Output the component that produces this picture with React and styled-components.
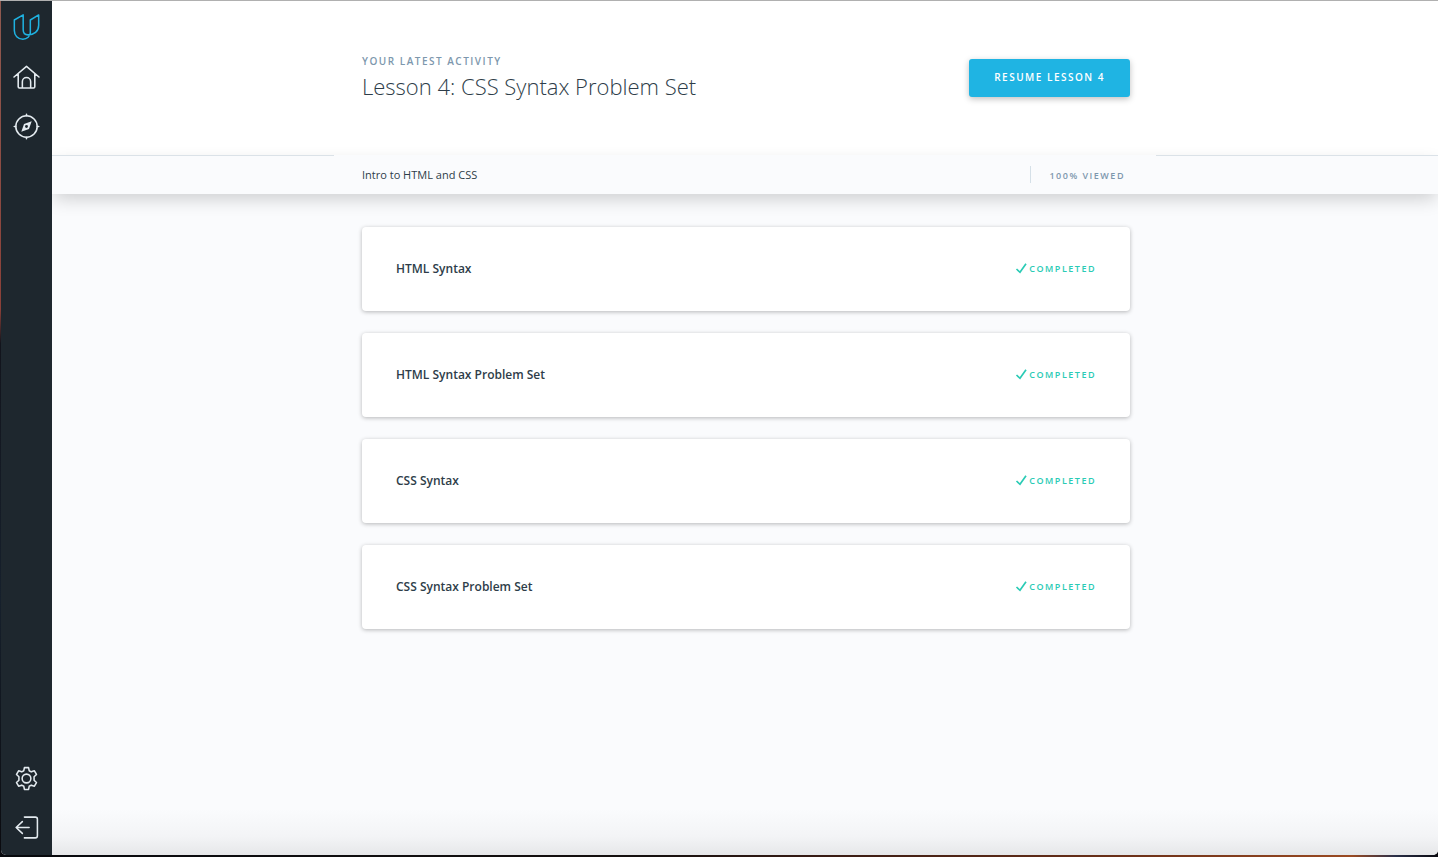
import React from "react";
import styled, { createGlobalStyle } from "styled-components";

const GlobalStyle = createGlobalStyle`
  *, *::before, *::after { box-sizing: border-box; }
  body {
    margin: 0;
    font-family: "Open Sans", "Noto Sans", sans-serif;
    color: #2e3d49;
    -webkit-font-smoothing: antialiased;
  }
  h1, h2, p { margin: 0; }
`;

const Desktop = styled.div`
  display: flex;
  flex-direction: column;
  min-height: 100vh;
  border-top: 1px solid #b0b0b0;
  padding: 0 0 2px 1px;
  background:
    linear-gradient(90deg, #07090d 0%, #15100f 45%, #3a1c14 58%, #6b3018 78%, #9a4a22 94%, #2a2f48 97%, #0a0a10 100%) bottom / 100% 2px no-repeat,
    linear-gradient(180deg, #8f5a50 0%, #8a4038 36%, #12141c 40%, #16202c 70%, #0a0a0e 100%);
`;

const Window = styled.div`
  display: flex;
  flex: 1;
  border-radius: 0 0 5px 5px;
  overflow: hidden;
  background: #fafbfd;
`;

const Sidebar = styled.nav`
  display: flex;
  flex-direction: column;
  justify-content: space-between;
  flex: none;
  width: 51px;
  padding: 2px 0 3px;
  background: #1e272e;
`;

const NavGroup = styled.div`
  display: flex;
  flex-direction: column;
`;

const NavLink = styled.a`
  display: flex;
  align-items: center;
  justify-content: center;
  height: 49px;
  margin-bottom: ${(p) => (p.$brand ? "1px" : "0")};
  color: ${(p) => (p.$brand ? "#1fb1e0" : "#e3eaef")};

  svg {
    display: block;
    width: 27px;
    height: 27px;
    fill: none;
    stroke: currentColor;
    stroke-width: 1.5;
    stroke-linecap: round;
    stroke-linejoin: round;
  }
`;

const Main = styled.main`
  display: flex;
  flex-direction: column;
  flex: 1;
  min-width: 0;
  overflow: hidden;
  background: linear-gradient(180deg, rgba(230, 231, 233, 0), #f3f4f6 60%, #e6e7e9) bottom / 100% 46px no-repeat;
`;

const Column = styled.div`
  display: flex;
  width: 100%;
  max-width: 822px;
  margin: 0 auto;
  padding: 0 26px 0 28px;
`;

const Header = styled.header`
  background: #fff;
`;

const HeaderColumn = styled(Column)`
  align-items: flex-start;
  justify-content: space-between;
  padding-top: 50px;
  padding-bottom: 54px;
`;

const Eyebrow = styled.p`
  font-size: 10px;
  line-height: 20px;
  font-weight: 600;
  letter-spacing: 1.5px;
  text-transform: uppercase;
  color: #7d97ad;
`;

const Title = styled.h1`
  font-size: 22px;
  line-height: 30px;
  font-weight: 300;
`;

const ResumeButton = styled.button`
  height: 38px;
  margin-top: 8px;
  padding: 0 25px 2px;
  border: 0;
  border-radius: 3px;
  background: #1fb4e3;
  box-shadow: 0 2px 6px rgba(0, 0, 0, 0.25);
  color: #fff;
  font-family: inherit;
  font-size: 10px;
  font-weight: 600;
  letter-spacing: 1.5px;
  text-transform: uppercase;
  white-space: nowrap;
`;

const CourseBar = styled.section`
  border-top: 1px solid #dbe2e8;
  background: #fafbfd;
  box-shadow: 0 7px 18px -2px rgba(0, 0, 0, 0.18);
`;

const CourseColumn = styled(Column)`
  align-items: center;
  justify-content: space-between;
  height: 39px;
  margin-top: -1px;
  background: #fafbfd;
`;

const CourseName = styled.h2`
  font-size: 11px;
  line-height: 20px;
  font-weight: 400;
`;

const Viewed = styled.p`
  padding: 3px 5px 0 18px;
  border-left: 1px solid #d5e0e8;
  font-size: 9px;
  line-height: 14px;
  font-weight: 600;
  letter-spacing: 1.5px;
  text-transform: uppercase;
  color: #7d97ad;
`;

const LessonColumn = styled(Column)`
  flex-direction: column;
  gap: 22px;
  padding-top: 33px;
  padding-bottom: 66px;
`;

const LessonCard = styled.a`
  display: flex;
  align-items: center;
  justify-content: space-between;
  height: 84px;
  padding: 0 34px;
  border-radius: 4px;
  background: #fff;
  box-shadow: 0 1px 4px rgba(0, 0, 0, 0.28);
  color: inherit;
  text-decoration: none;
`;

const LessonName = styled.span`
  font-size: 12px;
  line-height: 20px;
  font-weight: 600;
`;

const Status = styled.span`
  display: flex;
  align-items: center;
  gap: 2px;
  font-size: 9px;
  line-height: 20px;
  font-weight: 600;
  letter-spacing: 1.5px;
  text-transform: uppercase;
  color: #2acbb5;

  svg {
    width: 12px;
    height: 12px;
    fill: none;
    stroke: currentColor;
    stroke-width: 1.7;
  }
`;

const LogoIcon = () => (
  <svg viewBox="-.4 .3 26.5 26.5" aria-hidden="true">
    <path d="M.9 6.2 9.6 1.2v14.6c0 3 1.900 5 4.700 5 5.800 0 10.500-3.300 10.500-9.400V1.200l-8.200 5v12.200c0 3.800-3.200 6.600-7.300 6.600C4.400 25 .9 21.400.9 16.500Z" />
  </svg>
);

const HomeIcon = () => (
  <svg viewBox="0 .5 26 26" aria-hidden="true">
    <path d="M1 13 13 2.800 25 13M5 10v12.500c0 .800.400 1.200 1.200 1.200h13.600c.800 0 1.200-.400 1.200-1.200V10M9 23.500v-6a4 4 0 0 1 8 0v6" />
  </svg>
);

const CompassIcon = () => (
  <svg viewBox="0 0 26 26" aria-hidden="true">
    <circle cx="13" cy="13" r="10.300" />
    <path d="M13 1.200v1.500M13 23.300v1.500M1.200 13h1.500M23.300 13h1.500" />
    <path
      fill="currentColor"
      fillRule="evenodd"
      stroke="none"
      d="M18 8 15.400 15.400 8 18l2.600-7.400ZM13 11.600a1.400 1.400 0 1 0 0 2.800 1.400 1.400 0 0 0 0-2.800Z"
    />
  </svg>
);

const GearIcon = () => (
  <svg viewBox="0 0 26 26" aria-hidden="true">
    <circle cx="13" cy="13" r="4.200" />
    <path d="M11 2.500h4l.6 3 2 1.100 3-1 2 3.500-2.300 2.200v3.400l2.300 2.200-2 3.500-3-1-2 1.100-.6 3h-4l-.6-3-2-1.100-3 1-2-3.500 2.300-2.200v-3.400L3.400 9.100l2-3.500 3 1 2-1.100Z" />
  </svg>
);

const ExitIcon = () => (
  <svg viewBox="0 0 26 26" aria-hidden="true">
    <path d="M11 3h10.500c1.300 0 2 .7 2 2v16c0 1.300-.7 2-2 2H11M15.500 13H3M9 7.300 3 13l6 5.700" />
  </svg>
);

const CheckIcon = () => (
  <svg viewBox="0 0 12 12" aria-hidden="true">
    <path d="M1.500 6 5 9.300 11 .8" />
  </svg>
);

const lessons = [
  "HTML Syntax",
  "HTML Syntax Problem Set",
  "CSS Syntax",
  "CSS Syntax Problem Set",
];

export default function App() {
  return (
    <Desktop>
      <GlobalStyle />
      <Window>
        <Sidebar aria-label="Main">
          <NavGroup>
            <NavLink href="#" $brand aria-label="Udacity"><LogoIcon /></NavLink>
            <NavLink href="#home" aria-label="Home"><HomeIcon /></NavLink>
            <NavLink href="#catalog" aria-label="Catalog"><CompassIcon /></NavLink>
          </NavGroup>
          <NavGroup>
            <NavLink href="#settings" aria-label="Settings"><GearIcon /></NavLink>
            <NavLink href="#logout" aria-label="Log out"><ExitIcon /></NavLink>
          </NavGroup>
        </Sidebar>
        <Main>
          <Header>
            <HeaderColumn>
              <div>
                <Eyebrow>Your latest activity</Eyebrow>
                <Title>Lesson 4: CSS Syntax Problem Set</Title>
              </div>
              <ResumeButton type="button">Resume Lesson 4</ResumeButton>
            </HeaderColumn>
          </Header>
          <CourseBar>
            <CourseColumn>
              <CourseName>Intro to HTML and CSS</CourseName>
              <Viewed>100% viewed</Viewed>
            </CourseColumn>
          </CourseBar>
          <LessonColumn>
            {lessons.map((name) => (
              <LessonCard key={name} href="#lesson">
                <LessonName>{name}</LessonName>
                <Status><CheckIcon />Completed</Status>
              </LessonCard>
            ))}
          </LessonColumn>
        </Main>
      </Window>
    </Desktop>
  );
}
